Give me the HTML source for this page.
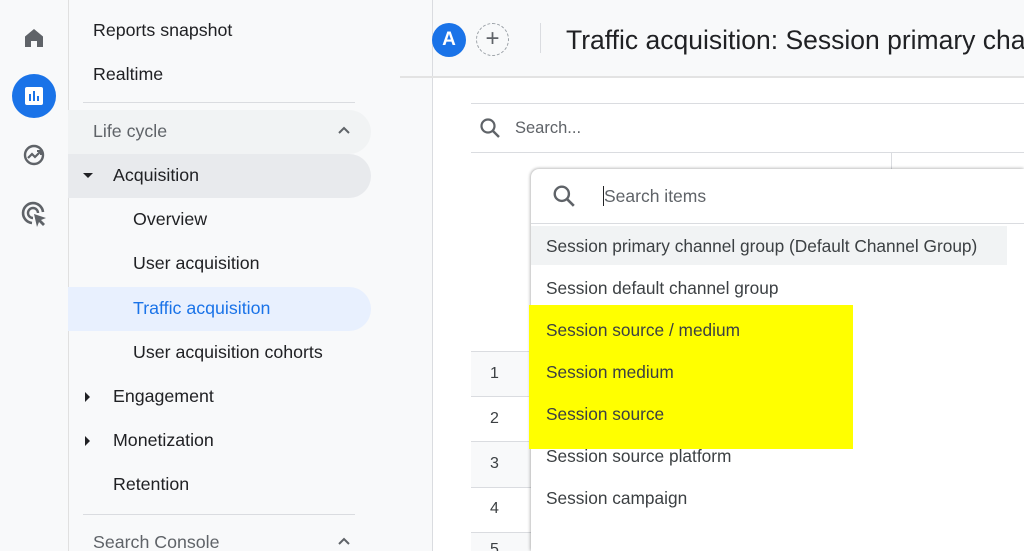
<!DOCTYPE html>
<html><head><style>
*{margin:0;padding:0;box-sizing:border-box}
html,body{width:1024px;height:551px;overflow:hidden}
body{background:#f8f9fa;font-family:"Liberation Sans",Arial,sans-serif;position:relative;color:#202124}
.a{position:absolute}
.nav{font-size:17.8px;white-space:nowrap}
.it{position:absolute;font-size:17.3px;color:#3c4043;white-space:nowrap;left:546px}
</style></head><body>
<div class="a" style="left:68px;top:0;width:1px;height:551px;background:#e0e0e0"></div>
<svg class="a" style="left:22px;top:26px" width="24" height="24" viewBox="0 0 24 24"><path d="M12 3L3 10.5V21h6v-6h6v6h6V10.5z" fill="#5f6368"/></svg>
<div class="a" style="left:12px;top:74px;width:44px;height:44px;border-radius:50%;background:#1a73e8"></div>
<svg class="a" style="left:24px;top:86px" width="20" height="20" viewBox="0 0 20 20"><rect x="1" y="1" width="18" height="18" rx="2" fill="#fff"/><rect x="5" y="8" width="2" height="7" fill="#1a73e8"/><rect x="9" y="5" width="2" height="10" fill="#1a73e8"/><rect x="13" y="10" width="2" height="5" fill="#1a73e8"/></svg>
<svg class="a" style="left:22px;top:143px" width="24" height="24" viewBox="0 0 24 24"><circle cx="12" cy="12" r="9" fill="none" stroke="#5f6368" stroke-width="2.4"/><path d="M6 15l4-4 3 3 5-5" fill="none" stroke="#5f6368" stroke-width="2.2"/><path d="M15 8h4v4" fill="none" stroke="#5f6368" stroke-width="2"/></svg>
<svg class="a" style="left:21px;top:201px" width="28" height="28" viewBox="0 0 28 28"><path d="M22 11A10 10 0 1 0 11 22" fill="none" stroke="#5f6368" stroke-width="2.6"/><path d="M17 12A5 5 0 1 0 12 17" fill="none" stroke="#5f6368" stroke-width="2.4"/><path d="M13 13l12 4-5 2 4 4-2 2-4-4-2 5z" fill="#5f6368"/></svg>
<div class="a nav" style="left:93px;top:20px">Reports snapshot</div>
<div class="a nav" style="left:93px;top:64px">Realtime</div>
<div class="a" style="left:83px;top:102px;width:272px;height:1px;background:#dadce0"></div>
<div class="a" style="left:68px;top:110px;width:303px;height:44px;background:#f1f3f4;border-radius:0 22px 22px 0"></div>
<div class="a nav" style="left:93px;top:121px;color:#5f6368">Life cycle</div>
<svg class="a" style="left:337px;top:125px" width="14" height="10" viewBox="0 0 14 10"><path d="M2 8l5-5 5 5" fill="none" stroke="#5f6368" stroke-width="2"/></svg>
<div class="a" style="left:68px;top:154px;width:303px;height:44px;background:#e8eaed;border-radius:0 22px 22px 0"></div>
<div class="a" style="left:83px;top:173px;width:0;height:0;border-left:5px solid transparent;border-right:5px solid transparent;border-top:5px solid #202124"></div>
<div class="a nav" style="left:113px;top:165px">Acquisition</div>
<div class="a nav" style="left:133px;top:209px">Overview</div>
<div class="a nav" style="left:133px;top:253px">User acquisition</div>
<div class="a" style="left:68px;top:287px;width:303px;height:44px;background:#e8f0fe;border-radius:0 22px 22px 0"></div>
<div class="a nav" style="left:133px;top:298px;color:#1a73e8">Traffic acquisition</div>
<div class="a nav" style="left:133px;top:342px">User acquisition cohorts</div>
<div class="a" style="left:85px;top:392px;border-top:5px solid transparent;border-bottom:5px solid transparent;border-left:5px solid #202124"></div>
<div class="a nav" style="left:113px;top:386px">Engagement</div>
<div class="a" style="left:85px;top:436px;border-top:5px solid transparent;border-bottom:5px solid transparent;border-left:5px solid #202124"></div>
<div class="a nav" style="left:113px;top:430px">Monetization</div>
<div class="a nav" style="left:113px;top:474px">Retention</div>
<div class="a" style="left:83px;top:514px;width:272px;height:1px;background:#dadce0"></div>
<div class="a nav" style="left:93px;top:532px;color:#5f6368">Search Console</div>
<svg class="a" style="left:337px;top:536px" width="14" height="10" viewBox="0 0 14 10"><path d="M2 8l5-5 5 5" fill="none" stroke="#5f6368" stroke-width="2"/></svg>
<div class="a" style="left:432px;top:0;width:1px;height:551px;background:#dadce0"></div>
<div class="a" style="left:433px;top:77px;width:591px;height:474px;background:#fff"></div>
<div class="a" style="left:400px;top:76px;width:624px;height:2px;background:#e3e3e3"></div>
<div class="a" style="left:432px;top:23px;width:34px;height:34px;border-radius:50%;background:#1a73e8;color:#fff;font-size:19px;font-weight:bold;text-align:center;line-height:34px">A</div>
<div class="a" style="left:476px;top:23px;width:33px;height:33px;border-radius:50%;border:1px dashed #9aa0a6;color:#5f6368;font-size:24px;text-align:center;line-height:30px">+</div>
<div class="a" style="left:540px;top:23px;width:1px;height:30px;background:#dadce0"></div>
<div class="a" style="left:566px;top:25px;width:458px;overflow:hidden;font-size:26.5px;white-space:nowrap;color:#202124">Traffic acquisition: Session primary channel group</div>
<div class="a" style="left:471px;top:103px;width:553px;height:1px;background:#dadce0"></div>
<div class="a" style="left:471px;top:152px;width:553px;height:1px;background:#dadce0"></div>
<svg class="a" style="left:479px;top:117px" width="22" height="22" viewBox="0 0 22 22"><circle cx="9" cy="9" r="6.5" fill="none" stroke="#5f6368" stroke-width="2.2"/><path d="M14 14l6 6" stroke="#5f6368" stroke-width="2.4"/></svg>
<div class="a" style="left:515px;top:119px;font-size:16.5px;color:#5f6368">Search...</div>
<div class="a" style="left:891px;top:152px;width:1px;height:20px;background:#dadce0"></div>
<div class="a" style="left:471px;top:351px;width:60px;height:45px;background:#f8f9fa;border-top:1px solid #dadce0"></div>
<div class="a" style="left:471px;top:396px;width:60px;height:45px;border-top:1px solid #dadce0"></div>
<div class="a" style="left:471px;top:441px;width:60px;height:46px;background:#f8f9fa;border-top:1px solid #dadce0"></div>
<div class="a" style="left:471px;top:487px;width:60px;height:45px;border-top:1px solid #dadce0"></div>
<div class="a" style="left:471px;top:532px;width:60px;height:19px;background:#f8f9fa;border-top:1px solid #dadce0"></div>
<div class="a" style="left:490px;top:365px;font-size:16px;color:#3c4043">1</div>
<div class="a" style="left:490px;top:410px;font-size:16px;color:#3c4043">2</div>
<div class="a" style="left:490px;top:455px;font-size:16px;color:#3c4043">3</div>
<div class="a" style="left:490px;top:500px;font-size:16px;color:#3c4043">4</div>
<div class="a" style="left:490px;top:541px;font-size:16px;color:#3c4043">5</div>
<div class="a" style="left:531px;top:169px;width:493px;height:382px;background:#fff;border-radius:8px 0 0 0;box-shadow:-1px 0 3px rgba(0,0,0,.2),0 -1px 3px rgba(0,0,0,.15)"></div>
<svg class="a" style="left:552px;top:184px" width="24" height="24" viewBox="0 0 22 22"><circle cx="9" cy="9" r="6.5" fill="none" stroke="#5f6368" stroke-width="2.2"/><path d="M14 14l6 6" stroke="#5f6368" stroke-width="2.4"/></svg>
<div class="a" style="left:603px;top:186px;width:1px;height:20px;background:#202124"></div>
<div class="a" style="left:604px;top:186px;font-size:17.5px;color:#5f6368">Search items</div>
<div class="a" style="left:531px;top:223px;width:493px;height:1px;background:#dadce0"></div>
<div class="a" style="left:531px;top:226px;width:476px;height:39px;background:#f1f3f4"></div>
<div class="a" style="left:529px;top:305px;width:324px;height:144px;background:#ffff00"></div>
<div class="it" style="top:236px">Session primary channel group (Default Channel Group)</div>
<div class="it" style="top:278px">Session default channel group</div>
<div class="it" style="top:320px">Session source / medium</div>
<div class="it" style="top:362px">Session medium</div>
<div class="it" style="top:404px">Session source</div>
<div class="it" style="top:446px">Session source platform</div>
<div class="it" style="top:488px">Session campaign</div>
</body></html>
